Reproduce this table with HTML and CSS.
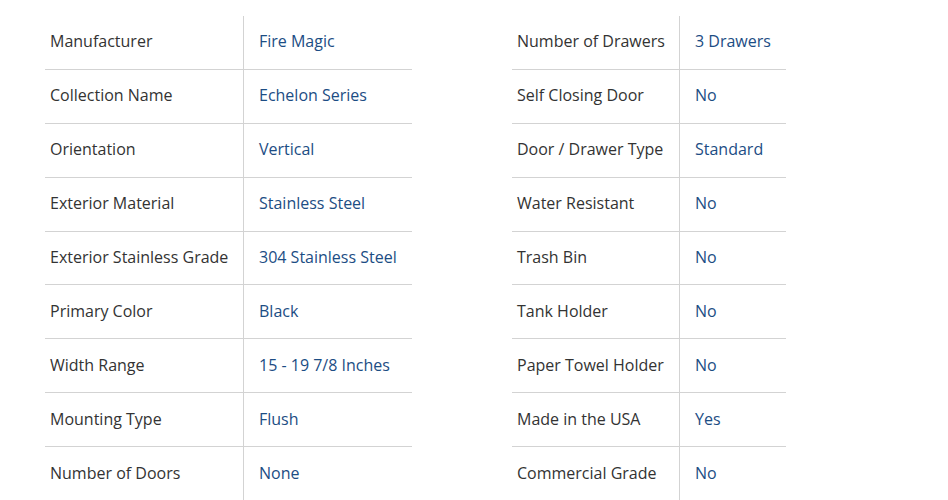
FILE: index.html
```html
<!DOCTYPE html>
<html>
<head>
<meta charset="utf-8">
<link rel="stylesheet" href="styles.css">
</head>
<body>
<div class="specs">
  <table class="spec-table left">
    <tr><td class="label">Manufacturer</td><td class="value">Fire Magic</td></tr>
    <tr><td class="label">Collection Name</td><td class="value">Echelon Series</td></tr>
    <tr><td class="label">Orientation</td><td class="value">Vertical</td></tr>
    <tr><td class="label">Exterior Material</td><td class="value">Stainless Steel</td></tr>
    <tr><td class="label">Exterior Stainless Grade</td><td class="value">304 Stainless Steel</td></tr>
    <tr><td class="label">Primary Color</td><td class="value">Black</td></tr>
    <tr><td class="label">Width Range</td><td class="value">15 - 19 7/8 Inches</td></tr>
    <tr><td class="label">Mounting Type</td><td class="value">Flush</td></tr>
    <tr><td class="label">Number of Doors</td><td class="value">None</td></tr>
  </table>
  <table class="spec-table right">
    <tr><td class="label">Number of Drawers</td><td class="value">3 Drawers</td></tr>
    <tr><td class="label">Self Closing Door</td><td class="value">No</td></tr>
    <tr><td class="label">Door / Drawer Type</td><td class="value">Standard</td></tr>
    <tr><td class="label">Water Resistant</td><td class="value">No</td></tr>
    <tr><td class="label">Trash Bin</td><td class="value">No</td></tr>
    <tr><td class="label">Tank Holder</td><td class="value">No</td></tr>
    <tr><td class="label">Paper Towel Holder</td><td class="value">No</td></tr>
    <tr><td class="label">Made in the USA</td><td class="value">Yes</td></tr>
    <tr><td class="label">Commercial Grade</td><td class="value">No</td></tr>
  </table>
</div>
</body>
</html>
```
FILE: styles.css
```css
html, body {
  margin: 0;
  padding: 0;
  background: #ffffff;
}
body {
  font-family: "Open Sans", "Liberation Sans", sans-serif;
  font-size: 16px;
  color: #333333;
}
.specs {
  display: flex;
  align-items: flex-start;
  gap: 100px;
  padding: 16px 0 0 45px;
}
.spec-table {
  border-collapse: collapse;
  table-layout: fixed;
}
.spec-table td {
  height: 50.9px;
  padding: 0 0 2px 0;
  border-bottom: 1px solid #d3d3d3;
  vertical-align: middle;
  white-space: nowrap;
  line-height: 22px;
}
.spec-table .label {
  padding-left: 5px;
  color: #333333;
}
.spec-table .value {
  padding-left: 15px;
  border-left: 1px solid #d3d3d3;
  color: #1c4d84;
}
.left .label { width: 193px; }
.left .value { width: 153px; }
.right .label { width: 162px; }
.right .value { width: 91px; }
```
